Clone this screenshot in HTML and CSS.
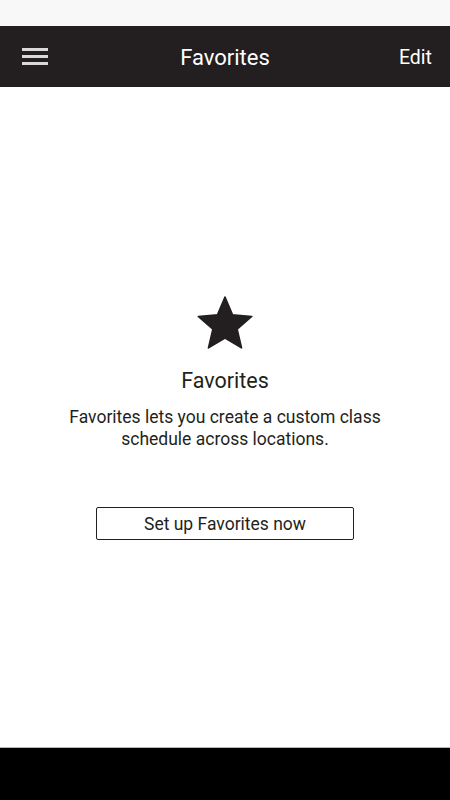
FILE: index.html
```html
<!DOCTYPE html>
<html lang="en">
<head>
<meta charset="utf-8">
<title>Favorites</title>
<link rel="stylesheet" href="styles.css">
</head>
<body>
<div class="screen">
  <div class="status-bar"></div>
  <header class="app-bar">
    <button class="menu-btn" aria-label="Menu">
      <span class="menu-line"></span>
      <span class="menu-line"></span>
      <span class="menu-line"></span>
    </button>
    <h1 class="app-title">Favorites</h1>
    <button class="edit-btn">Edit</button>
  </header>
  <main class="content">
    <svg class="star" viewBox="1.6 1.6 20.8 19.8" width="56" height="53" aria-hidden="true">
      <path d="M12 17.27L18.18 21l-1.64-7.03L22 9.24l-7.19-.61L12 2 9.19 8.63 2 9.24l5.46 4.73L5.82 21z" fill="#231f20" stroke="#231f20" stroke-width="0.6" stroke-linejoin="round"/>
    </svg>
    <h2 class="empty-title">Favorites</h2>
    <p class="empty-text">Favorites lets you create a custom class schedule across locations.</p>
    <button class="setup-btn">Set up Favorites now</button>
  </main>
  <div class="nav-bar"></div>
</div>
</body>
</html>
```
FILE: styles.css
```css
* { box-sizing: border-box; }
html, body { margin: 0; padding: 0; height: 100%; }
body {
  font-family: Roboto, "Noto Sans", "Liberation Sans", sans-serif;
  color: #231f20;
  background: #ffffff;
}
.screen {
  display: flex;
  flex-direction: column;
  height: 800px;
  width: 450px;
}
.status-bar {
  height: 26px;
  background: #f8f8f8;
  flex: none;
}
.app-bar {
  height: 61px;
  flex: none;
  background: #231f20;
  display: flex;
  align-items: center;
  justify-content: space-between;
  padding: 1px 18px 0 22px;
  position: relative;
}
.menu-btn {
  background: none;
  border: 0;
  padding: 0;
  width: 26px;
  display: flex;
  flex-direction: column;
  gap: 4px;
  margin-top: -2px;
  cursor: pointer;
}
.menu-line {
  display: block;
  height: 3px;
  width: 26px;
  background: #d9d9d9;
}
.app-title {
  position: absolute;
  left: 0;
  right: 0;
  top: 0;
  bottom: 0;
  display: flex;
  align-items: center;
  justify-content: center;
  padding-top: 2px;
  margin: 0;
  font-size: 22px;
  font-weight: 400;
  color: #ffffff;
  pointer-events: none;
}
.edit-btn {
  background: none;
  border: 0;
  padding: 0;
  font-family: inherit;
  font-size: 19.5px;
  color: #ffffff;
  cursor: pointer;
}
.content {
  flex: 1;
  display: flex;
  flex-direction: column;
  align-items: center;
  padding-top: 209px;
}
.star {
  display: block;
}
.empty-title {
  margin: 19px 0 0;
  font-size: 21.5px;
  line-height: 26px;
  font-weight: 400;
}
.empty-text {
  margin: 13px 0 0;
  width: 340px;
  text-align: center;
  font-size: 17.5px;
  line-height: 21.7px;
}
.setup-btn {
  margin-top: 57px;
  width: 258px;
  height: 33px;
  background: #ffffff;
  border: 1px solid #231f20;
  border-radius: 2px;
  font-family: inherit;
  font-size: 17.5px;
  color: #231f20;
  padding: 0;
}
.nav-bar {
  height: 53px;
  flex: none;
  background: #000000;
  border-top: 1px solid #b5b5b5;
}
```
